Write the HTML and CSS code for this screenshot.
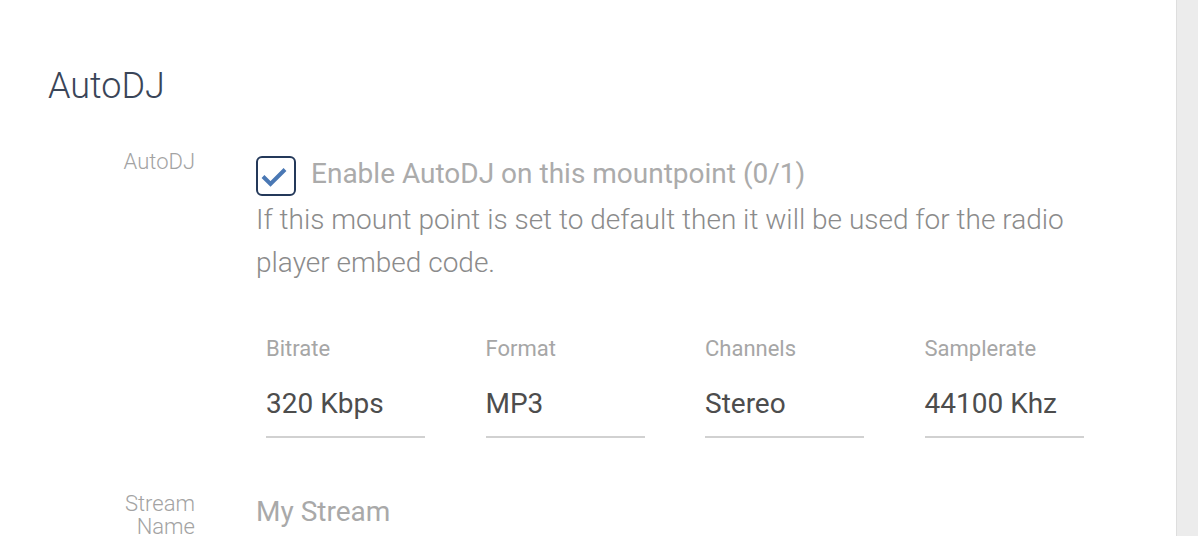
FILE: index.html
```html
<!DOCTYPE html>
<html lang="en">
<head>
<meta charset="utf-8">
<title>AutoDJ</title>
<link rel="stylesheet" href="styles.css">
</head>
<body>
<div class="layout">
  <main class="main">
    <h2 class="section-title">AutoDJ</h2>

    <div class="form-row form-row--first">
      <div class="row-label">AutoDJ</div>
      <div class="row-body">
        <label class="check">
          <span class="check-box">
            <svg viewBox="0 0 36 36" width="36" height="36" aria-hidden="true">
              <path d="M5 18.5 L12.5 26 L27 11.5" fill="none" stroke="#4a78b4" stroke-width="4" stroke-linecap="butt" stroke-linejoin="miter"/>
            </svg>
          </span>
          <span class="check-text">Enable AutoDJ on this mountpoint (0/1)</span>
        </label>
        <p class="help">If this mount point is set to default then it will be used for the radio player embed code.</p>

        <div class="fields">
          <div class="field">
            <div class="field-label">Bitrate</div>
            <div class="field-value">320 Kbps</div>
          </div>
          <div class="field">
            <div class="field-label">Format</div>
            <div class="field-value">MP3</div>
          </div>
          <div class="field">
            <div class="field-label">Channels</div>
            <div class="field-value">Stereo</div>
          </div>
          <div class="field">
            <div class="field-label">Samplerate</div>
            <div class="field-value">44100 Khz</div>
          </div>
        </div>
      </div>
    </div>

    <div class="form-row form-row--stream">
      <div class="row-label">Stream<br>Name</div>
      <div class="row-body">
        <div class="placeholder">My Stream</div>
      </div>
    </div>
  </main>
  <aside class="side-strip"></aside>
</div>
</body>
</html>
```

FILE: styles.css
```css
* { box-sizing: border-box; }

html, body {
  margin: 0;
  padding: 0;
  height: 100%;
}

body {
  font-family: Roboto, "Liberation Sans", Arial, sans-serif;
  background: #ffffff;
  overflow: hidden;
}

.layout {
  display: flex;
  height: 536px;
}

.main {
  flex: 1;
  padding: 64px 0 0 48px;
  background: #ffffff;
  overflow: hidden;
}

.side-strip {
  width: 22px;
  background: #ececec;
  border-left: 1px solid #dedede;
}

.section-title {
  margin: 0;
  font-size: 36px;
  line-height: 44px;
  font-weight: 300;
  color: #3a4558;
}

.form-row {
  display: flex;
  align-items: flex-start;
}

.form-row--first {
  margin-top: 42px;
}

.row-label {
  width: 147px;
  flex: none;
  text-align: right;
  font-size: 22px;
  line-height: 24px;
  font-weight: 300;
  color: #a3a3a3;
}

.row-body {
  margin-left: 61px;
  flex: 1;
}

.form-row--first .row-body {
  padding-top: 6px;
}

.check {
  display: flex;
  align-items: flex-start;
}

.check-box {
  width: 40px;
  height: 40px;
  flex: none;
  border: 2px solid #24395a;
  border-radius: 6px;
  display: flex;
  align-items: center;
  justify-content: center;
}

.check-box svg {
  display: block;
}

.check-text {
  margin-left: 15px;
  font-size: 28px;
  line-height: 36px;
  font-weight: 400;
  color: #ababab;
}

.help {
  margin: 2px 0 0 0;
  font-size: 28px;
  line-height: 43px;
  font-weight: 300;
  color: #8b8b8b;
  max-width: 860px;
}

.fields {
  display: grid;
  grid-template-columns: repeat(4, 159px);
  column-gap: 60.5px;
  padding-left: 10px;
  margin-top: 53px;
}

.field-label {
  font-size: 22px;
  line-height: 24px;
  font-weight: 400;
  color: #a6a6a6;
}

.field-value {
  margin-top: 26px;
  font-size: 28px;
  line-height: 34px;
  font-weight: 400;
  color: #4d4d4d;
  padding-bottom: 15px;
  border-bottom: 2px solid #d1d1d1;
}

.form-row--stream {
  margin-top: 54px;
}

.form-row--stream .row-label {
  line-height: 23px;
}

.placeholder {
  font-size: 28px;
  line-height: 32px;
  font-weight: 400;
  color: #a9a9a9;
  margin-top: 4px;
}
```
